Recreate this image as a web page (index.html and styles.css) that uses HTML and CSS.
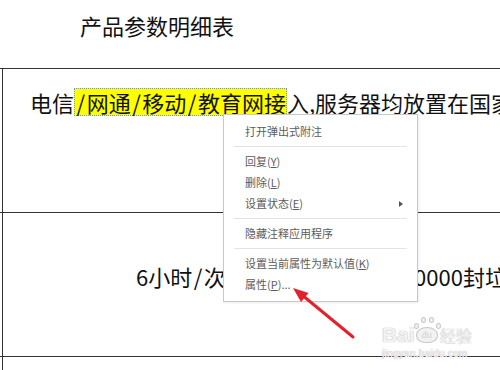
FILE: index.html
```html
<!DOCTYPE html>
<html lang="zh-CN">
<head>
<meta charset="utf-8">
<title>产品参数明细表</title>
<link rel="stylesheet" href="styles.css">
</head>
<body>
<div class="page">
  <div class="title">产品参数明细表</div>
  <div class="table">
    <div class="row">
      <div class="cell cell-1">电信<span class="hl"><span class="sl">/</span>网通<span class="sl">/</span>移动<span class="sl">/</span>教育网接</span>入,服务器均放置在国家级数据中心</div>
    </div>
    <div class="row">
      <div class="cell cell-2">6小时<span class="sl">/</span>次，每日可拦截超过10000封垃圾邮件</div>
    </div>
    <div class="row row-last">
      <div class="cell"></div>
    </div>
  </div>

  <div class="menu">
    <div class="item">打开弹出式附注</div>
    <div class="sep"></div>
    <div class="item">回复(<u>Y</u>)</div>
    <div class="item">删除(<u>L</u>)</div>
    <div class="item item-sub"><span>设置状态(<u>E</u>)</span><span class="tri"></span></div>
    <div class="sep"></div>
    <div class="item">隐藏注释应用程序</div>
    <div class="sep"></div>
    <div class="item">设置当前属性为默认值(<u>K</u>)</div>
    <div class="item">属性(<u>P</u>)...</div>
  </div>

  <svg class="arrow" width="500" height="370" viewBox="0 0 500 370">
    <line x1="353" y1="337" x2="302" y2="295" stroke="#e3212b" stroke-width="3" stroke-linecap="round"/>
    <polygon points="293,288 308.5,293 301,302" fill="#e3212b"/>
  </svg>

  <div class="wm">
    <div class="wm-top">
      <span class="wm-bai">Bai</span>
      <span class="wm-paw">
        <span class="toe t1"></span><span class="toe t2"></span><span class="toe t3"></span><span class="toe t4"></span>
        <span class="wm-du">du</span>
      </span>
      <span class="wm-jy">经验</span>
    </div>
    <div class="wm-url">jingyan.baidu.com</div>
  </div>
</div>
</body>
</html>
```

FILE: styles.css
```css
* { box-sizing: border-box; }
html, body { margin: 0; padding: 0; background: #fff; }
body {
  width: 500px;
  height: 370px;
  overflow: hidden;
  font-family: "Noto Sans CJK SC", "Noto Sans", sans-serif;
  color: #111;
}
.page { position: relative; width: 500px; height: 370px; overflow: hidden; }

.title {
  height: 68px;
  padding: 10px 0 0 80px;
  font-size: 22px;
  line-height: 30px;
}

.table { border-top: 1px solid #333; }
.row { height: 144px; border-bottom: 1px solid #333; }
.row-last { border-bottom: none; }
.cell {
  height: 100%;
  margin-left: 2px;
  border-left: 1px solid #333;
  font-size: 22px;
  line-height: 30px;
  white-space: nowrap;
  overflow: hidden;
}
.cell-1 { padding: 18px 0 0 27px; }
.cell-2 { padding: 48px 0 0 133px; }

.sl { padding: 0 1.5px; }
.hl {
  display: inline-block;
  line-height: 26px;
  background: #ffff00;
  border: 1px dotted #7d9aa8;
}

.menu {
  position: absolute;
  left: 223px;
  top: 114px;
  width: 195px;
  height: 188px;
  padding: 6px 0;
  background: #fff;
  border: 1px solid #c9c9c9;
  box-shadow: 1px 1px 2px rgba(0,0,0,0.08);
  font-size: 11px;
  color: #5c5c5c;
}
.item {
  height: 21px;
  line-height: 21px;
  padding: 0 14px 0 21px;
}
.item u { text-decoration-thickness: 1px; text-underline-offset: 1px; }
.item-sub { display: flex; justify-content: space-between; align-items: center; }
.tri {
  width: 0; height: 0;
  border-left: 4px solid #555;
  border-top: 3px solid transparent;
  border-bottom: 3px solid transparent;
}
.sep { height: 1px; margin: 4px 10px; background: #e4e4e4; }

.arrow { position: absolute; left: 0; top: 0; pointer-events: none; }

.wm {
  position: absolute;
  left: 382px;
  top: 314px;
  color: #f2f2f2;
  text-shadow: 0 0 1px #b9b9b9, 0 0 1px #c9c9c9;
}
.wm-top { display: flex; align-items: flex-end; height: 32px; }
.wm-bai {
  font-family: "Liberation Sans", sans-serif;
  font-weight: bold;
  font-size: 21px;
  line-height: 22px;
}
.wm-paw {
  position: relative;
  width: 22px;
  height: 16px;
  margin: 0 2px 3px 1px;
  border-radius: 50% 50% 45% 45%;
  background: #f2f2f2;
  border: 1px solid #c8c8c8;
  display: flex;
  align-items: center;
  justify-content: center;
}
.wm-du {
  font-family: "Liberation Sans", sans-serif;
  font-size: 9px;
  line-height: 10px;
  color: #d0d0d0;
  text-shadow: none;
}
.toe {
  position: absolute;
  width: 5px; height: 6px;
  border-radius: 50%;
  background: #f2f2f2;
  border: 1px solid #c8c8c8;
}
.t1 { left: -3px; top: -5px; }
.t2 { left: 4px; top: -11px; }
.t3 { left: 12px; top: -11px; }
.t4 { left: 19px; top: -5px; }
.wm-jy { font-size: 16px; line-height: 22px; }
.wm-url {
  font-family: "Liberation Sans", sans-serif;
  font-size: 10px;
  line-height: 12px;
  margin-top: 2px;
  letter-spacing: 0.3px;
}
```
